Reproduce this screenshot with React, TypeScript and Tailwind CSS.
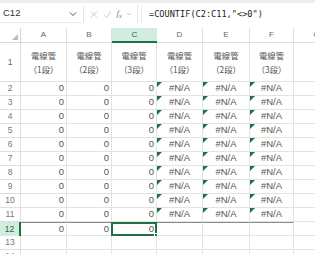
import React from 'react';

const cols = ['A', 'B', 'C', 'D', 'E', 'F', 'G'];
const widths = ['w-[46px]', 'w-[45px]', 'w-[45px]', 'w-[46px]', 'w-[47px]', 'w-[44px]', 'w-[46px]'];

const Tri = () => (
  <span className="absolute left-0 top-0 w-0 h-0 border-t-[5px] border-t-[#1e7145] border-r-[5px] border-r-transparent" />
);

export default function App() {
  const rows = [2, 3, 4, 5, 6, 7, 8, 9, 10, 11, 12, 13, 14];

  return (
    <div className="w-[315px] h-[254px] overflow-hidden bg-white text-[#444] relative" style={{ fontFamily: '"Liberation Sans", Arial, sans-serif' }}>
      {/* formula bar */}
      <div className="h-[28px] bg-white border-t-[3px] border-[#eeeeee] pt-[2px] flex items-start">
        <div className="h-[18px] w-[82px] bg-white flex items-center justify-between pl-[3px] pr-[5px] border-b border-[#ececec]">
          <span className="text-[9.5px] text-[#333]">C12</span>
          <svg width="8" height="6" viewBox="0 0 8 6"><path d="M1 1.5 L4 4.5 L7 1.5" fill="none" stroke="#555" strokeWidth="1" /></svg>
        </div>
        <div className="h-[18px] w-[55px] ml-[1px] bg-white flex items-center gap-[5px] px-[6px] border-x border-[#e6e6e6]">
          <svg width="9" height="9" viewBox="0 0 9 9"><path d="M1 1 L8 8 M8 1 L1 8" stroke="#c4c4c4" strokeWidth="1" /></svg>
          <svg width="10" height="9" viewBox="0 0 10 9"><path d="M1 5 L4 8 L9 1" fill="none" stroke="#c4c4c4" strokeWidth="1" /></svg>
          <span className="text-[9px] italic text-[#777]" style={{ fontFamily: '"Liberation Serif", serif' }}>f<sub className="text-[6px]">x</sub></span>
          <svg width="5" height="4" viewBox="0 0 5 4"><path d="M0.5 1 L2.5 3 L4.5 1" fill="none" stroke="#aaa" strokeWidth="0.8" /></svg>
        </div>
        <div className="h-[18px] flex-1 ml-[3px] bg-white flex items-center pl-[7px] border-l border-[#ececec]">
          <span className="text-[8.6px] text-[#222]" style={{ fontFamily: '"DejaVu Sans Mono", "Liberation Mono", monospace' }}>=COUNTIF(C2:C11,"&lt;&gt;0")</span>
        </div>
      </div>

      {/* column header */}
      <div className="flex h-[15px] bg-white">
        <div className="w-[21px] shrink-0 border-r border-b border-[#d6d6d6] relative">
          <span className="absolute right-[2px] bottom-[2px] w-0 h-0 border-b-[6px] border-b-[#bdbdbd] border-l-[6px] border-l-transparent" />
        </div>
        {cols.map((c, i) => (
          <div
            key={c}
            className={`${widths[i]} shrink-0 flex items-center justify-center text-[8px] ${
              c === 'C' ? 'bg-[#d2ecdd] border-b-2 border-[#1e7145] text-[#1e6a40]' : 'border-r border-b border-[#dedede] text-[#666]'
            }`}
          >
            {c}
          </div>
        ))}
      </div>

      {/* row 1 */}
      <div className="flex h-[39px]">
        <div className="w-[21px] shrink-0 border-r border-b border-[#dedede] flex items-center justify-center text-[8.5px] text-[#666]">1</div>
        {cols.map((c, i) => (
          <div key={c} className={`${widths[i]} shrink-0 border-r border-b border-[#e3e3e3] flex flex-col items-center justify-center gap-[4px] text-[8.3px] text-[#555]`} style={{ fontFamily: '"Noto Sans CJK JP", sans-serif' }}>
            {i < 6 && (
              <>
                <span className="leading-[10px]">電線管</span>
                <span className="leading-[10px]">（{(i % 3) + 1}段）</span>
              </>
            )}
          </div>
        ))}
      </div>

      {/* data rows */}
      {rows.map((r) => {
        const sel = r === 12;
        const data = r <= 12;
        const na = r <= 11;
        return (
          <div key={r} className="flex h-[14px]">
            <div className={`w-[21px] shrink-0 flex items-center justify-center text-[8.5px] ${sel ? 'bg-[#d2ecdd] border-r-2 border-[#1e7145] text-[#1e6a40]' : 'border-r border-b border-[#dedede] text-[#777]'}`}>
              {r}
            </div>
            {cols.map((c, i) => {
              const num = data && i < 3;
              const err = na && i >= 3 && i < 6;
              return (
                <div
                  key={c}
                  className={`${widths[i]} shrink-0 relative flex items-center text-[9.5px] text-[#555] border-r border-b border-[#e3e3e3] ${
                    num ? 'justify-end pr-[2px]' : 'justify-center'
                  } ${sel && i < 6 ? 'border-t border-t-[#8a8a8a]' : ''}`}
                >
                  {num && '0'}
                  {err && (
                    <>
                      <Tri />
                      #N/A
                    </>
                  )}
                  {sel && c === 'C' && (
                    <span className="absolute -left-px -top-px -right-px -bottom-px border-2 border-[#1e7145]">
                      <span className="absolute -right-[3px] -bottom-[3px] w-[4px] h-[4px] bg-[#1e7145] border border-white" />
                    </span>
                  )}
                </div>
              );
            })}
          </div>
        );
      })}
    </div>
  );
}
